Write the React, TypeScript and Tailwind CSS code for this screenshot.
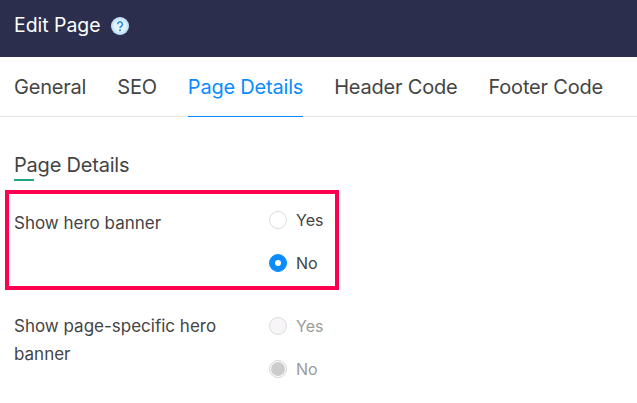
const tabs = ["General", "SEO", "Page Details", "Header Code", "Footer Code"];

const Radio = ({ label, checked, disabled }: { label: string; checked?: boolean; disabled?: boolean }) => {
  let circle = "border-[#dcdcdc] bg-white";
  if (disabled) circle = "border-[#dcdcdc] bg-[#f7f5f7]";
  if (checked) circle = "border-[#0a8cff] bg-[#0a8cff]";
  if (checked && disabled) circle = "border-[#d4d4d4] bg-white";

  return (
    <div className="flex h-[18px] items-center gap-[9px]">
      <span className={`flex h-[18px] w-[18px] items-center justify-center rounded-full border ${circle}`}>
        {checked && !disabled && <span className="h-[6px] w-[6px] rounded-full bg-white" />}
        {checked && disabled && <span className="h-[14px] w-[14px] rounded-full bg-[#cccccc]" />}
      </span>
      <span className={`text-[16px] leading-[16px] ${disabled ? "text-[#9b9b9b]" : "text-[#444444]"}`}>{label}</span>
    </div>
  );
};

const App = () => {
  return (
    <div className="h-[403px] w-[637px] overflow-hidden bg-white font-['Inter',sans-serif]">
      <header className="flex h-[57px] items-center gap-[10px] bg-[#2b2f4d] pb-[5px] pl-[14px]">
        <h1 className="text-[19.4px] font-normal text-white">Edit Page</h1>
        <svg width="18" height="18" viewBox="0 0 18 18">
          <circle cx="9" cy="9" r="9" fill="#c5e3fd" />
          <circle cx="9" cy="9" r="6.5" fill="#e4f2fe" />
          <path d="M6.6 7.2a2.4 2.4 0 1 1 3.6 2.1c-.8.5-1.2.9-1.2 1.7" fill="none" stroke="#1a87ec" strokeWidth="1.5" />
          <circle cx="9" cy="13.2" r="1" fill="#1a87ec" />
        </svg>
      </header>

      <nav className="flex h-[60px] gap-[31px] border-b border-[#e6e6e6] pl-[14px]">
        {tabs.map((tab) => (
          <div
            key={tab}
            className={`flex h-[60px] items-center whitespace-nowrap border-b text-[20px] tracking-[-0.2px] ${
              tab === "Page Details" ? "border-[#0a8cff] text-[#0a8cff]" : "border-transparent text-[#444444]"
            }`}
          >
            {tab}
          </div>
        ))}
      </nav>

      <h2 className="mt-[36px] pl-[14px] text-[20px] leading-[24px] font-normal tracking-[-0.2px] text-[#444444]">
        Page Details
      </h2>
      <div className="mt-[2px] ml-[14px] h-[2px] w-[20px] bg-[#1fa58a]" />

      <section className="mt-[9px] ml-[5px] flex h-[100px] w-[334px] border-4 border-[#ff0050] pt-[17px] pl-[5px]">
        <div className="w-[255px] text-[17px] leading-[28px] text-[#444444]">
          <span className="relative -top-[2px]">Show hero banner</span>
        </div>
        <div className="flex flex-col gap-[25px]">
          <Radio label="Yes" />
          <Radio label="No" checked />
        </div>
      </section>

      <section className="mt-[27px] flex pl-[14px]">
        <div className="-mt-[5px] w-[255px] pr-[30px] text-[17px] leading-[28px] text-[#444444]">
          Show page-specific hero banner
        </div>
        <div className="flex flex-col gap-[25px]">
          <Radio label="Yes" disabled />
          <Radio label="No" checked disabled />
        </div>
      </section>
    </div>
  );
};

export default App;
